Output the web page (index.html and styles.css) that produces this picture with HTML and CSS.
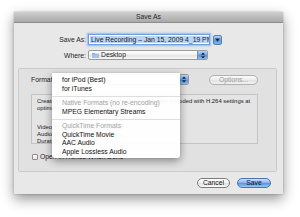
FILE: index.html
```html
<!DOCTYPE html>
<html>
<head>
<meta charset="utf-8">
<link rel="stylesheet" href="styles.css">
</head>
<body>
<div class="window">
  <div class="titlebar">Save As</div>
  <div class="content">
    <div class="form">
      <div class="label">Save As:</div>
      <div class="field-row">
        <div class="textfield"><span class="sel">Live Recording – Jan 15, 2009 4_19 PM</span></div>
        <div class="disclosure"><svg width="5" height="4" viewBox="0 0 5 4"><path d="M0 0.5 H5 L2.5 3.8 Z" fill="#1a2a44"/></svg></div>
      </div>
      <div class="label">Where:</div>
      <div class="popup where">
        <span class="folder"><svg width="7" height="6" viewBox="0 0 7 6"><path d="M0 1 H2.6 L3.2 1.7 H7 V6 H0 Z" fill="#7fa6d8"/><path d="M0 2.2 H7 V6 H0 Z" fill="#a3c2ea"/></svg></span>
        <span class="ptext">Desktop</span>
        <span class="arrows"><svg width="4" height="7" viewBox="0 0 4 7"><path d="M0 2.8 L2 0.4 L4 2.8 Z M0 4.2 L2 6.6 L4 4.2 Z" fill="#15243a"/></svg></span>
      </div>
    </div>

    <div class="group">
      <div class="format-row">
        <span class="flabel">Format:</span>
        <div class="popup format">
          <span class="ptext">for iPod (Best)</span>
          <span class="arrows"><svg width="4" height="7" viewBox="0 0 4 7"><path d="M0 2.8 L2 0.4 L4 2.8 Z M0 4.2 L2 6.6 L4 4.2 Z" fill="#15243a"/></svg></span>
        </div>
        <div class="btn options">Options...</div>
      </div>
      <div class="desc">
        <p class="dline">Creates a movie optimized for the iPod, with video encoded with H.264 settings at</p>
        <p class="dline">optimal quality for iPod playback.</p>
        <p class="dline spaced">Video: H.264, 640 x 480, Millions</p>
        <p class="dline">Audio: AAC, 44.100 kHz, Stereo</p>
        <p class="dline">Duration: 0:00:12</p>
      </div>
      <div class="check"><span class="box"></span><span>Open in iTunes When Done</span></div>
    </div>

    <div class="buttons">
      <div class="btn push">Cancel</div>
      <div class="btn push default">Save</div>
    </div>
  </div>
</div>

<div class="menu">
  <div class="item">for iPod (Best)</div>
  <div class="item">for iTunes</div>
  <div class="sep"></div>
  <div class="item head">Native Formats (no re-encoding)</div>
  <div class="item">MPEG Elementary Streams</div>
  <div class="sep"></div>
  <div class="item head">QuickTime Formats</div>
  <div class="item">QuickTime Movie</div>
  <div class="item">AAC Audio</div>
  <div class="item">Apple Lossless Audio</div>
</div>
</body>
</html>
```

FILE: styles.css
```css
html, body {
  margin: 0;
  padding: 0;
  background: #ffffff;
}
body {
  width: 300px;
  height: 217px;
  overflow: hidden;
  position: relative;
  font-family: "Liberation Sans", Arial, sans-serif;
  font-size: 6.8px;
  color: #1c1c1c;
}
.window {
  margin: 12px 0 0 14px;
  width: 269px;
  background: #e8e8e8;
  box-shadow: 0 5px 12px rgba(0,0,0,0.42), 0 0 2px rgba(0,0,0,0.25);
  padding-bottom: 6px;
}
.titlebar {
  height: 10px;
  line-height: 10px;
  text-align: center;
  background: linear-gradient(#cfcfcf, #a9a9a9);
  border-bottom: 1px solid #8d8d8d;
  color: #262626;
}
.content {
  display: flex;
  flex-direction: column;
}
.form {
  margin-top: 10px;
  display: grid;
  grid-template-columns: 72px auto;
  column-gap: 1px;
  row-gap: 4px;
  align-items: center;
}
.label {
  text-align: right;
  color: #1f1f1f;
}
.field-row {
  display: flex;
  align-items: center;
  height: 13px;
}
.textfield {
  box-sizing: border-box;
  margin: 1px;
  width: 122px;
  height: 11px;
  line-height: 9px;
  background: #ffffff;
  border: 1px solid #6d9fdd;
  box-shadow: 0 0 0 1px #a9c9f1, 0 0 2px 1px rgba(90,150,230,0.5);
  overflow: hidden;
  white-space: nowrap;
  padding-left: 1px;
}
.sel {
  background: #bad4f4;
  padding: 0 1px;
}
.disclosure {
  margin-left: 2px;
  box-sizing: border-box;
  width: 9px;
  height: 10px;
  border: 1px solid #5a7fae;
  border-radius: 2px;
  background: linear-gradient(#b5d4f6, #5f9be3 55%, #7db4f0);
  display: flex;
  align-items: center;
  justify-content: center;
}
.popup {
  box-sizing: border-box;
  height: 10px;
  border: 1px solid #9a9a9a;
  border-radius: 2px;
  background: linear-gradient(#ffffff, #f0f0f0 50%, #e3e3e3 51%, #f6f6f6);
  display: flex;
  align-items: center;
  overflow: hidden;
}
.where {
  margin-left: 1px;
  width: 120px;
}
.folder {
  display: flex;
  margin-left: 3px;
  margin-right: 2px;
}
.ptext {
  flex: 1;
  white-space: nowrap;
  line-height: 8px;
}
.arrows {
  width: 10px;
  height: 100%;
  box-sizing: border-box;
  border-left: 1px solid #6c8fbc;
  background: linear-gradient(#bcd8f7, #6ea4e6 50%, #4d8ddc 51%, #8fc0f3);
  display: flex;
  align-items: center;
  justify-content: center;
}
.group {
  margin: 8px 6px 0 4px;
  height: 104px;
  box-sizing: border-box;
  border: 1px solid #cbcbcb;
  border-radius: 2px;
  background: #e1e1e1;
  padding: 4px 0 0 12px;
  display: flex;
  flex-direction: column;
}
.format-row {
  display: flex;
  align-items: center;
  height: 13px;
}
.flabel {
  width: 27px;
}
.format {
  width: 131px;
  height: 11px;
  padding-left: 6px;
}
.btn {
  box-sizing: border-box;
  height: 10px;
  line-height: 8px;
  border-radius: 5px;
  text-align: center;
  white-space: nowrap;
}
.options {
  margin-left: 20px;
  width: 49px;
  border: 1px solid #b0b0b0;
  background: linear-gradient(#fbfbfb, #ececec 50%, #e2e2e2 51%, #f2f2f2);
  color: #9a9a9a;
}
.desc {
  margin-top: 8px;
  width: 227px;
  height: 50px;
  box-sizing: border-box;
  border: 1px solid #c4c4c4;
  background: #e4e4e4;
  padding: 3px 0 0 5px;
  overflow: hidden;
}
.dline {
  margin: 0;
  line-height: 7px;
  font-size: 5.9px;
  white-space: nowrap;
  color: #1a1a1a;
}
.spaced {
  margin-top: 11.5px;
}
.check {
  margin-top: 9px;
  display: flex;
  align-items: center;
  gap: 2px;
  height: 7px;
  line-height: 7px;
  margin-left: 1px;
}
.box {
  width: 6px;
  height: 6px;
  box-sizing: border-box;
  border: 1px solid #8e8e8e;
  border-radius: 1px;
  background: linear-gradient(#ffffff, #e6e6e6);
}
.buttons {
  margin-top: 6px;
  display: flex;
  justify-content: flex-end;
  gap: 7px;
  padding-right: 12px;
}
.push {
  width: 33px;
  border: 1px solid #7c7c7c;
  background: linear-gradient(#ffffff, #f1f1f1 50%, #e0e0e0 51%, #fafafa);
  color: #141414;
}
.push.default {
  width: 34px;
  border-color: #4a76ad;
  background: linear-gradient(#c6e0fb, #7fb3ef 50%, #4f91e1 51%, #97c8f6);
  color: #0f1a2a;
}
.menu {
  position: absolute;
  left: 52px;
  top: 73px;
  width: 128px;
  box-sizing: border-box;
  padding: 3px 0 2px 0;
  background: rgba(255,255,255,0.95);
  box-shadow: 0 3px 8px rgba(0,0,0,0.4), 0 0 1px rgba(0,0,0,0.3);
  border-radius: 0 0 3px 3px;
}
.item {
  height: 8.5px;
  line-height: 8.5px;
  padding-left: 10px;
  color: #111;
  white-space: nowrap;
}
.item.head {
  color: #a3a3a3;
}
.sep {
  height: 6px;
  box-sizing: border-box;
  border-bottom: 1px solid #dedede;
  transform: translateY(-2px);
}
```
